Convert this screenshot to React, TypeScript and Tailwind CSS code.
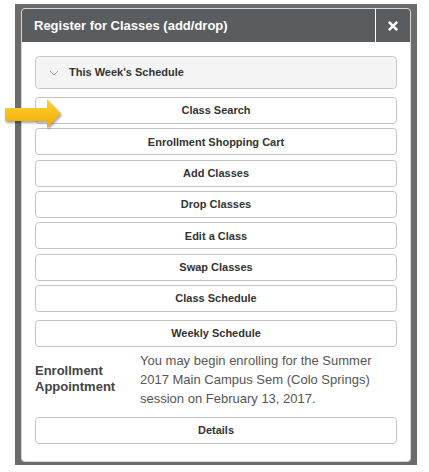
import { FaTimes } from "react-icons/fa";

const actions = [
  "Class Search",
  "Enrollment Shopping Cart",
  "Add Classes",
  "Drop Classes",
  "Edit a Class",
  "Swap Classes",
  "Class Schedule",
];

function ActionButton({ label }: { label: string }) {
  return (
    <button className="h-[27px] w-full rounded-[4px] border border-[#c4c4c4] bg-white text-center text-[11px] font-bold text-[#333]">
      {label}
    </button>
  );
}

function PointerArrow() {
  return (
    <svg
      width="57"
      height="29"
      viewBox="0 0 57 29"
      className="absolute left-[5px] top-[95px] drop-shadow-[1px_2px_1px_rgba(0,0,0,0.35)]"
    >
      <defs>
        <linearGradient id="gold" x1="0" y1="0" x2="0" y2="1">
          <stop offset="0" stopColor="#fdd33a" />
          <stop offset="1" stopColor="#f2aa00" />
        </linearGradient>
      </defs>
      <path d="M0 9 H42 V0 L56 14.5 L42 29 V22 H0 Z" fill="url(#gold)" />
    </svg>
  );
}

export default function App() {
  return (
    <div className="relative min-h-screen bg-white font-['Liberation_Sans',Arial,sans-serif]">
      <div className="ml-[15px] mt-[4px] w-[402px] bg-[#6b6b6b] px-[6px] pb-[3px] pt-[4px]">
        <div className="overflow-hidden rounded-[4px] border border-[#d6d6d6] bg-white">
          {/* header */}
          <div className="flex h-[33px] items-center bg-[#5a5d60]">
            <h2 className="flex-1 pl-[12px] text-[13px] font-bold text-white">
              Register for Classes (add/drop)
            </h2>
            <button className="flex h-full w-[35px] items-center justify-center border-l border-white text-white">
              <FaTimes size={14} />
            </button>
          </div>

          {/* body */}
          <div className="px-[13px] pb-[17px] pt-[14px]">
            <div className="flex h-[33px] items-center gap-[10px] rounded-[4px] border border-[#c8c8c8] bg-[#f4f4f4] pl-[13px]">
              <svg width="10" height="6" viewBox="0 0 10 6" fill="none">
                <path d="M1 1 L5 5 L9 1" stroke="#9a9a9a" strokeWidth="1" />
              </svg>
              <span className="text-[11px] font-bold text-[#333]">This Week's Schedule</span>
            </div>

            <div className="mt-[8px] flex flex-col gap-[4.33px]">
              {actions.map((a) => (
                <ActionButton key={a} label={a} />
              ))}
            </div>

            <div className="mt-[8px]">
              <ActionButton label="Weekly Schedule" />
            </div>

            <div className="mt-[4px] grid grid-cols-[105px_1fr] items-center">
              <div className="text-[13px] font-bold leading-[16px] text-[#444]">
                Enrollment
                <br />
                Appointment
              </div>
              <p className="text-[13px] leading-[19px] text-[#555]">
                You may begin enrolling for the Summer 2017 Main Campus Sem (Colo Springs) session on
                February 13, 2017.
              </p>
            </div>

            <div className="mt-[9px]">
              <ActionButton label="Details" />
            </div>
          </div>
        </div>
      </div>
      <PointerArrow />
    </div>
  );
}
